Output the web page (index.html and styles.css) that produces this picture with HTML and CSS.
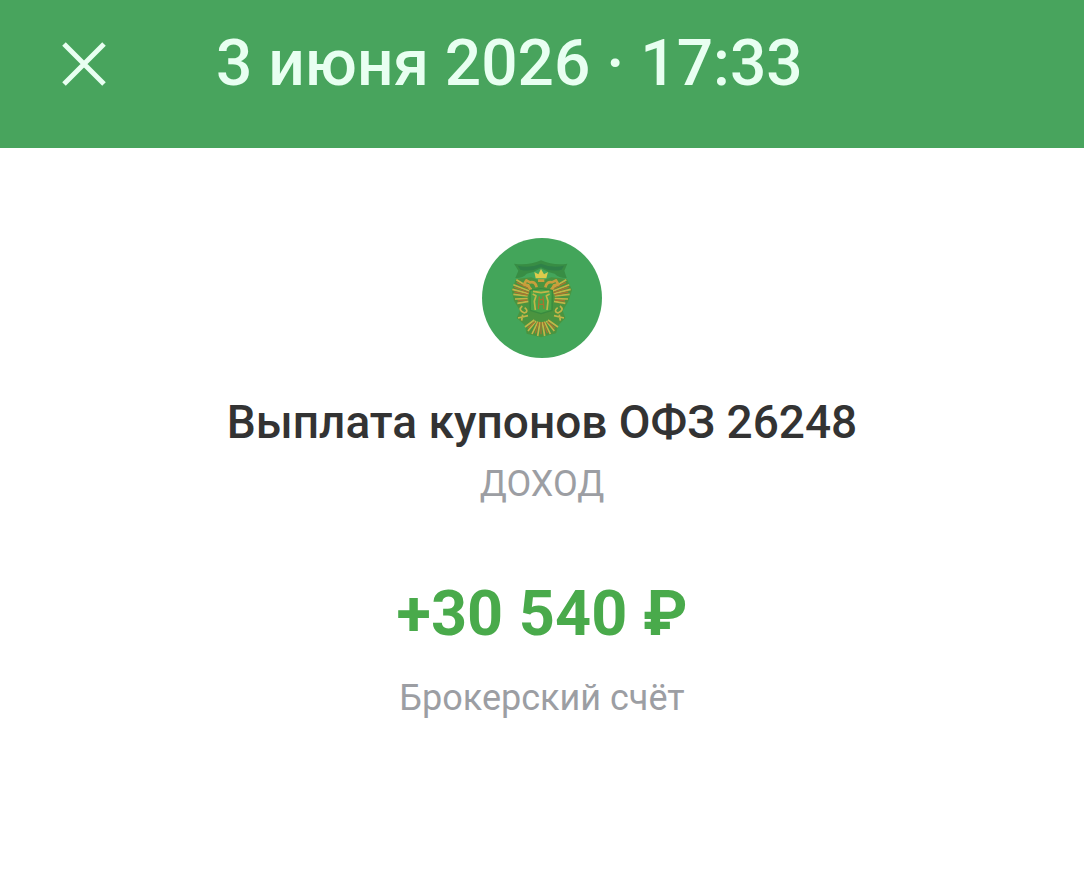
FILE: index.html
```
<!DOCTYPE html>
<html lang="ru">
    <head>
        <meta charset="utf-8">
        <title>Выплата купонов</title>
        <meta name="viewport" content="width=device-width, initial-scale=1.0">
        <link rel="stylesheet" href="styles.css">
    </head>
    <body>
        <header class="bar">
            <button class="close" type="button" aria-label="Закрыть">
                <svg viewBox="0 0 44 44" width="44" height="44"><path d="M2 2 L42 42 M42 2 L2 42"/></svg>
            </button>
            <h1>3 июня 2026 · 17:33</h1>
        </header>
        <main class="operation">
            <svg class="logo" viewBox="30 30 360 360" aria-hidden="true">
                <!-- ribbon -->
                <path class="dark" d="M126 107 Q168 114 207 97 Q246 114 286 107 L277 128 L284 150 Q262 151 248 137 Q226 133 207 121 Q187 133 164 137 Q152 151 130 150 L139 128 Z"/>
                <path class="ribbon" d="M137 113 Q173 122 207 107 Q242 122 276 113 L269 125 Q236 133 207 117 Q177 133 145 125 Z"/>
                <!-- body and wings -->
                <path class="body" d="M132 153 L178 148 L207 160 L238 148 L285 153 L300 186 L289 220 L272 248 L280 270 L260 291 L252 316 L207 328 L164 317 L158 291 L134 270 L144 248 L126 218 L119 186 Z"/>
                <g class="gold">
                    <path d="M179 183 L133 155 M174 190 L124 170 M170 197 L121 184 M167 204 L124 199 M167 212 L129 213 M169 220 L136 226 M236 183 L283 155 M241 190 L292 170 M245 197 L296 184 M248 204 L293 199 M248 212 L288 213 M246 220 L280 226"/>
                    <path d="M151 234 Q136 246 157 255 Q172 250 158 239 M264 234 Q279 246 258 255 Q243 250 257 239 M168 263 L138 270 M246 263 L276 270 M152 260 L149 278 M262 260 L265 278"/>
                    <path d="M187 276 L159 297 M192 279 L168 309 M198 281 L180 318 M204 282 L197 324 M211 282 L218 324 M217 281 L235 318 M223 279 L247 309 M228 276 L258 297"/>
                </g>
                <g class="copper">
                    <path d="M176 185 L134 163 M171 194 L126 177 M167 201 L127 192 M166 216 L137 219 M239 185 L282 163 M244 194 L290 177 M248 201 L289 192 M249 216 L279 219"/>
                    <path d="M188 281 L167 301 M200 282 L190 316 M207 282 L207 319 M214 282 L226 316 M227 281 L249 301"/>
                </g>
                <!-- heads -->
                <path class="heads" d="M194 178 Q190 159 174 163 L163 157 L156 169 L169 172 L178 190 M220 178 Q225 159 240 163 L252 157 L259 169 L246 172 L237 190"/>
                <!-- crown -->
                <path class="crown" d="M191 151 L187 132 L199 139 L207 123 L216 139 L228 132 L223 151 Z"/>
                <path class="heads" d="M198 158 L217 158"/>
                <!-- shield -->
                <path class="shield" d="M174 187 L207 182 L241 187 L240 247 L207 257 L175 247 Z"/>
                <path class="gold" d="M182 198 L192 203 L187 220 L190 246 M233 198 L223 203 L228 220 L225 246 M183 190 L207 194 L232 190"/>
                <path class="copper" d="M202 205 L199 243 M213 205 L216 243 M200 215 L215 215 M200 229 L215 229"/>
            </svg>
            <h2>Выплата купонов ОФЗ 26248</h2>
            <p class="type">ДОХОД</p>
            <p class="amount">+30 540 ₽</p>
            <p class="account">Брокерский счёт</p>
        </main>
    </body>
</html>
```

FILE: styles.css
```
body {margin:0;background:#fff;color:#333;font-family:Roboto, sans-serif;}
h1, h2, p {margin:0;font-weight:500;}
.bar {display:flex;align-items:center;gap:110px;padding:26px 62px 46px;background:#48a45d;color:#e8fff1;}
.bar h1 {font-size:64px;line-height:76px;}
.close {display:flex;padding:0;border:0;background:none;color:inherit;}
.close path {fill:none;stroke:currentColor;stroke-width:5;}

.operation {display:flex;flex-direction:column;align-items:center;padding:90px 24px;text-align:center;}
.operation h2 {margin-top:36px;font-size:46px;line-height:56px;}
.type, .account {font-size:36px;line-height:44px;color:#9c9ea3;font-weight:400;}
.type {margin-top:12px;}
.amount {margin-top:70px;font-size:63px;line-height:76px;color:#49aa4b;font-weight:700;}
.account {margin-top:24px;}

.logo {width:120px;height:120px;border-radius:50%;background:#43a55a;}
.logo path {stroke-linejoin:round;}
.dark {fill:#388d44;}
.ribbon {fill:#2f8048;}
.body {fill:#4b943f;}
.gold {fill:none;stroke:#c2b548;stroke-width:5;}
.copper {fill:none;stroke:#a8742f;stroke-width:4;}
.heads {fill:none;stroke:#c99f3c;stroke-width:8;}
.crown {fill:#dccb4c;}
.shield {fill:#4aa348;stroke:#398b3f;stroke-width:4;}
```
